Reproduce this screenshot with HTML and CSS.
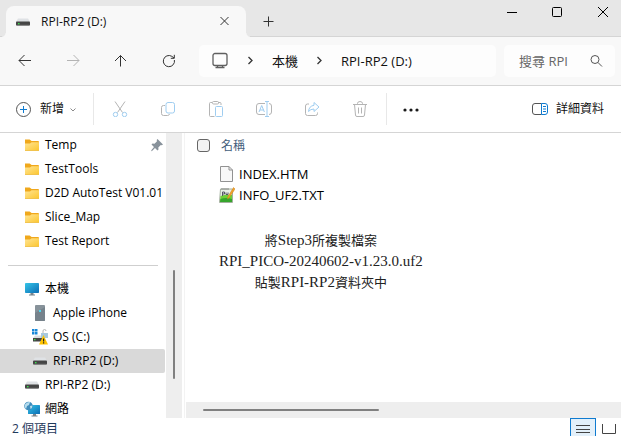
FILE: index.html
```html
<!DOCTYPE html>
<html lang="zh-Hant">
<head>
<meta charset="utf-8">
<meta name="viewport" content="width=device-width, initial-scale=1">
<title>RPI-RP2 (D:)</title>
<link rel="stylesheet" href="styles.css">
</head>
<body>
<svg class="defs" aria-hidden="true">
  <defs>
    <linearGradient id="gold" x1="0" y1="0" x2="1" y2="1"><stop offset="0" stop-color="#ffe596"/><stop offset="1" stop-color="#fcc62f"/></linearGradient>
    <linearGradient id="screen" x1="0" y1="0" x2="1" y2="1"><stop offset="0" stop-color="#35c5e8"/><stop offset="1" stop-color="#0c6db5"/></linearGradient>
    <symbol id="folder" viewBox="0 0 16 16"><path d="M1 2.500h4.600l2 1.500H14a1 1 0 0 1 1 1V9H1z" fill="#f0a81c"/><path d="M1 13.500V6.600h5l1.600-1.400H15v8.300z" fill="url(#gold)"/><path d="M1 13h14v.8H1z" fill="#eebb3a"/></symbol>
    <symbol id="drive" viewBox="0 0 16 16"><path d="M3 4.500h10l2 3.500H1z" fill="#dfe2e5"/><rect x="1" y="7.500" width="14" height="4" rx=".8" fill="#454545"/><path d="M1.500 10.800h13v.7h-13z" fill="#777"/><rect x="3" y="9" width="1.500" height="1.300" fill="#3be34c"/></symbol>
    <symbol id="monitor" viewBox="0 0 16 16"><rect x="1" y="2" width="14" height="10" rx=".8" fill="url(#screen)"/><path d="M6.500 12h3v1.500h1.500v1h-6v-1h1.500z" fill="#79848c"/></symbol>
  </defs>
</svg>

<header class="titlebar">
  <div class="tab">
    <svg class="i16"><use href="#drive"/></svg>
    <span class="tab-name">RPI-RP2 (D:)</span>
    <button class="plain i16" aria-label="關閉索引標籤"><svg class="i16" viewBox="0 0 16 16"><path d="M4.500 3l8 8M12.500 3l-8 8" class="ink"/></svg></button>
  </div>
  <button class="plain i16" aria-label="新增索引標籤"><svg class="i16" viewBox="0 0 16 16"><path d="M8.500 2.500v10M3.500 7.500h10" class="ink"/></svg></button>
  <div class="window-buttons">
    <button class="plain i16" aria-label="最小化"><svg class="i16" viewBox="0 0 16 16"><path d="M2 8.500h10" class="black"/></svg></button>
    <button class="plain i16" aria-label="最大化"><svg class="i16" viewBox="0 0 16 16"><rect x="2.500" y="3.500" width="9" height="9" rx="1" class="black"/></svg></button>
    <button class="plain i16" aria-label="關閉"><svg class="i16" viewBox="0 0 16 16"><path d="M3 3l10 10M13 3L3 13" class="black"/></svg></button>
  </div>
</header>

<nav class="navbar">
  <div class="nav-buttons">
    <button class="plain" aria-label="上一頁"><svg class="i16" viewBox="0 0 16 16"><path d="M14 7.500H2M7.500 2L2 7.500 7.500 13" class="ink"/></svg></button>
    <button class="plain" aria-label="下一頁" disabled><svg class="i16" viewBox="0 0 16 16"><path d="M2 7.500h12M8.500 2L14 7.500 8.500 13" class="dim"/></svg></button>
    <button class="plain" aria-label="上移"><svg class="i16" viewBox="0 0 16 16"><path d="M7.500 13.500V2.500M2 8L7.500 2.500 13 8" class="ink"/></svg></button>
    <button class="plain" aria-label="重新整理"><svg class="i16" viewBox="0 0 16 16"><path d="M13.400 7A5.600 5.600 0 1 1 10.800 3.300L13 5M13.300 1.800v3.500H9.800" class="ink"/></svg></button>
  </div>
  <div class="address">
    <svg class="i20" viewBox="0 0 20 20"><rect x="4" y="2.500" width="14" height="12" rx="2" class="grey heavy"/><path d="M8.500 14.500v2M13.500 14.500v2M6.500 16.500h9" class="grey heavy"/></svg>
    <svg class="i16 sep" viewBox="0 0 16 16"><path d="M6.500 4L10 7.500 6.500 11" class="ink heavy"/></svg>
    <a href="#pc">本機</a>
    <svg class="i16 sep" viewBox="0 0 16 16"><path d="M6.500 4L10 7.500 6.500 11" class="ink heavy"/></svg>
    <a href="#drive-d">RPI-RP2 (D:)</a>
  </div>
  <div class="search">
    <input type="text" placeholder="搜尋 RPI" aria-label="搜尋 RPI">
    <svg class="i16" viewBox="0 0 16 16"><circle cx="7" cy="6.500" r="4" class="grey2"/><path d="M10 9.500l4 4" class="grey2"/></svg>
  </div>
</nav>

<div class="commands">
  <button class="plain new">
    <svg class="i16" viewBox="0 0 16 16"><circle cx="7.500" cy="8.500" r="7" class="grey2"/><path d="M7.500 5v7M4 8.500h7" class="blue"/></svg>
    <span>新增</span>
    <svg class="i8" viewBox="0 0 8 8"><path d="M1.500 3.500L4 6 6.500 3.500" class="mid"/></svg>
  </button>
  <div class="tools">
    <button class="plain" aria-label="剪下" disabled><svg class="i16" viewBox="0 0 16 16"><path d="M3 .5l7.500 11M13 .5L5.500 11.500" class="dim"/><circle cx="3.500" cy="13.500" r="2.200" class="sky"/><circle cx="12.500" cy="13.500" r="2.200" class="sky"/></svg></button>
    <button class="plain" aria-label="複製" disabled><svg class="i16" viewBox="0 0 16 16"><path d="M5 4.500H3.500a2 2 0 0 0-2 2v6a2 2 0 0 0 2 2h4a2 2 0 0 0 2-1.500" class="dim"/><rect x="6" y="1.500" width="8.500" height="10.500" rx="2" class="sky"/></svg></button>
    <button class="plain" aria-label="貼上" disabled><svg class="i16" viewBox="0 0 16 16"><path d="M6.500 15.500h-4a1 1 0 0 1-1-1v-12a1 1 0 0 1 1-1H4M10 1.500h2a1 1 0 0 1 1 1V4" class="dim"/><rect x="4.500" y=".5" width="6" height="2.500" rx="1" class="dim"/><rect x="7.500" y="5.500" width="7" height="10" rx="1" class="sky"/></svg></button>
    <button class="plain" aria-label="重新命名" disabled><svg class="i16" viewBox="0 0 16 16"><path d="M9 2.500H3a2.500 2.500 0 0 0-2.500 2.500v6A2.500 2.500 0 0 0 3 13.500h6M13 2.500a2.500 2.500 0 0 1 2.500 2.500v6a2.500 2.500 0 0 1-2.500 2.500" class="dim"/><path d="M11 .5v15M9 .5h4M9 15.500h4M3 11l2.700-6.500L8.400 11M4 9h3.500" class="sky"/></svg></button>
    <button class="plain" aria-label="共用" disabled><svg class="i16" viewBox="0 0 16 16"><path d="M5 3H3.500a2 2 0 0 0-2 2v7.500a2 2 0 0 0 2 2h8a2 2 0 0 0 2-2v-1" class="dim"/><path d="M10 1.500L15 6l-5 4.500V8Q6.500 8 4.500 10.500 5 5 10 4.300z" class="sky"/></svg></button>
    <button class="plain" aria-label="刪除" disabled><svg class="i16" viewBox="0 0 16 16"><path d="M1 3.500h14M5.500 3V2.500a2.500 2 0 0 1 5 0V3M2.500 3.500l1 10.500a1.500 1.500 0 0 0 1.500 1.500h6a1.500 1.500 0 0 0 1.500-1.500l1-10.500M6.500 6.500v6M9.500 6.500v6" class="dim"/></svg></button>
  </div>
  <button class="plain more" aria-label="查看更多"><svg class="i20" viewBox="0 0 20 20"><circle cx="4" cy="11" r="1.600"/><circle cx="10" cy="11" r="1.600"/><circle cx="16" cy="11" r="1.600"/></svg></button>
  <button class="plain details">
    <svg class="i16" viewBox="0 0 16 16"><path d="M9.500 2.500H3a2.500 2.500 0 0 0-2.500 2.500v6A2.500 2.500 0 0 0 3 13.500h6.500" class="grey2"/><path d="M9.500 2.500H13A2.500 2.500 0 0 1 15.500 5v6a2.500 2.500 0 0 1-2.500 2.500H9.500zM11 5.500h3M11 8h3M11 10.500h3" class="blue"/></svg>
    <span>詳細資料</span>
  </button>
</div>

<div class="body">
  <aside class="sidebar">
    <ul>
      <li><svg class="i16"><use href="#folder"/></svg><span>Temp</span><svg class="i16 pin" viewBox="0 0 16 16"><path d="M9.500 2L15 7.500l-1.200.8-1-.2-2.500 2.500.2 2-1 1L7 11l-3 3-.8.200L3.500 13l2.500-3L3.500 7.500l1-1 2 .2L9 4.200 8.700 3z" fill="#88929b"/></svg></li>
      <li><svg class="i16"><use href="#folder"/></svg><span>TestTools</span></li>
      <li><svg class="i16"><use href="#folder"/></svg><span>D2D AutoTest V01.01</span></li>
      <li><svg class="i16"><use href="#folder"/></svg><span>Slice_Map</span></li>
      <li><svg class="i16"><use href="#folder"/></svg><span>Test Report</span></li>
    </ul>
    <hr>
    <ul>
      <li><svg class="i16"><use href="#monitor"/></svg><span>本機</span></li>
      <li class="child"><svg class="i16" viewBox="0 0 16 16"><rect x="3" y="0" width="10" height="16" rx="1" fill="#87929a"/><path d="M3 8l10-6v13a1 1 0 0 1-1 1H4a1 1 0 0 1-1-1z" fill="#76828b"/><rect x="7" y="5" width="2" height="2" fill="#4fd6ef"/></svg><span>Apple iPhone</span></li>
      <li class="child"><svg class="i16" viewBox="0 0 16 16"><path d="M0 0h2.500v2.500H0zM3 0h2.500v2.500H3zM0 3h2.500v2.500H0zM3 3h2.500v2.500H3z" fill="#1787d8"/><path d="M3 6.500h9L14 9H1z" fill="#d8dde1"/><rect x="1" y="9" width="11" height="3.500" fill="#444"/><rect x="2" y="10" width="1.500" height="1.300" fill="#3be34c"/><rect x="9" y="4" width="7" height="5" fill="#a8c8dd"/><path d="M11 4V2q0-1.500 1.500-1.500T14 2" class="dim"/><path d="M11.500 6L16 15.500H7z" fill="#ffc400"/><path d="M11 9.500h1.200v3H11zM11 13.300h1.200v1.200H11z" fill="#222"/></svg><span>OS (C:)</span></li>
      <li class="child selected"><svg class="i16"><use href="#drive"/></svg><span>RPI-RP2 (D:)</span></li>
      <li><svg class="i16"><use href="#drive"/></svg><span>RPI-RP2 (D:)</span></li>
      <li><svg class="i16" viewBox="0 0 16 16"><rect x="4" y="4" width="12" height="9" rx=".6" fill="url(#screen)"/><path d="M9 13h3v1.500h1.500v1h-6v-1H9z" fill="#79848c"/><circle cx="4.500" cy="5" r="4.300" fill="#3f8cbc"/><path d="M1 3.500Q3 .5 6 1L5 4 3 5 2 8Q0 6 1 3.500zM6 5l2.500-.5Q8.500 7 6.500 8z" fill="#b6dced"/></svg><span>網路</span></li>
    </ul>
  </aside>
  <div class="vscroll"><div class="vthumb"></div></div>
  <main class="content">
    <table class="files">
      <thead><tr><th><label class="head"><input type="checkbox"><span>名稱</span></label></th></tr></thead>
      <tbody>
        <tr><td><div class="file"><svg class="i16" viewBox="0 0 16 16"><path d="M1.500.5h8.500l3.500 3.500v11.500h-12z" fill="#f8f8f8" stroke="#929292"/><path d="M10 .5V4h3.500" fill="none" stroke="#929292"/></svg><span>INDEX.HTM</span></div></td></tr>
        <tr><td><div class="file"><svg class="i16" viewBox="0 0 16 16"><path d="M1.500 2h12v13.500h-13z" fill="#e8eee6" stroke="#a3b09e"/><path d="M1.500 9q5-2 11.500-1v7H1z" fill="#6fcf36"/><path d="M1.500 12q5-2 11.500 0v3H1z" fill="#36a52c"/><path d="M3 1v2M5 1v2M7 1v2M9 1v2" stroke="#888"/><path d="M3.500 5v4M3.500 5h2v2h-2M7 5.500v2h2v-2" stroke="#556" fill="none"/><path d="M14.500 .5L16 2 10 11l-1.500.8.300-1.800z" fill="#f3a329" stroke="#c9801f" stroke-width=".5"/></svg><span>INFO_UF2.TXT</span></div></td></tr>
      </tbody>
    </table>
    <p class="note">將<span class="latin">Step3</span>所複製檔案<br><span class="latin">RPI_PICO-20240602-v1.23.0.uf2</span><br>貼製<span class="latin">RPI-RP2</span>資料夾中</p>
    <div class="hscroll"><div class="hthumb"></div></div>
  </main>
</div>

<footer class="status">
  <span class="count">2 個項目</span>
  <div class="views">
    <button class="view active" aria-label="詳細資料檢視"><svg class="i16" viewBox="0 0 16 16"><path d="M1 2.500h14M1 6.500h14M1 9.500h14" class="line"/></svg></button>
    <button class="view" aria-label="大圖示檢視"><svg class="i16" viewBox="0 0 16 16"><path d="M1.500 1v9.500h13V1" class="line"/></svg></button>
  </div>
</footer>
</body>
</html>
```
FILE: styles.css
```css
* { box-sizing: border-box; }

body {
  margin: 0;
  height: 100vh;
  display: flex;
  flex-direction: column;
  overflow: hidden;
  background: #fff;
  color: #111;
  font: 12px/16px "Open Sans", "Noto Sans CJK TC", sans-serif;
}

.defs { position: absolute; width: 0; height: 0; }
svg { display: block; flex: none; fill: none; }
.i8 { width: 8px; height: 8px; }
.i16 { width: 16px; height: 16px; }
.i20 { width: 20px; height: 20px; }

.ink { stroke: #333; fill: none; }
.black { stroke: #000; fill: none; }
.grey { stroke: #606060; fill: none; }
.grey2 { stroke: #555; fill: none; }
.mid { stroke: #8a8a8a; fill: none; }
.dim { stroke: #b4b4b4; fill: none; }
.blue { stroke: #0f7bd0; fill: none; }
.sky { stroke: #9fcdf0; fill: none; }
.line { stroke: #444; fill: none; }
.heavy { stroke-width: 1.3; }

.plain {
  border: 0;
  padding: 0;
  background: none;
  color: inherit;
  font: inherit;
  display: flex;
  align-items: center;
  justify-content: center;
}

/* Title bar */
.titlebar {
  flex: none;
  display: flex;
  align-items: flex-end;
  gap: 14px;
  height: 37px;
  padding: 0 10px 0 6px;
  background: #e7e7e7;
  border-bottom: 1px solid #d5d5d5;
}
.titlebar > .plain { margin-bottom: 6px; }
.tab {
  position: relative;
  display: flex;
  align-items: center;
  width: 240px;
  height: 31px;
  margin-bottom: -1px;
  padding: 0 14px 0 9px;
  background: #f8f8f8;
  border-radius: 8px 8px 0 0;
}
.tab::before, .tab::after {
  content: "";
  position: absolute;
  bottom: 0;
  width: 4px;
  height: 4px;
}
.tab::before { left: -4px; background: radial-gradient(circle at 0 0, transparent 3px, #f8f8f8 4px); }
.tab::after { right: -4px; background: radial-gradient(circle at 100% 0, transparent 3px, #f8f8f8 4px); }
.tab-name { flex: 1; padding-left: 10px; }
.window-buttons {
  align-self: flex-start;
  display: flex;
  gap: 29px;
  margin-left: auto;
  padding-top: 4px;
}

/* Navigation bar */
.navbar {
  flex: none;
  display: flex;
  gap: 8px;
  height: 49px;
  padding: 8px 6px 8px 1px;
  background: #f8f8f8;
  border-bottom: 1px solid #d5d5d5;
}
.nav-buttons { display: flex; width: 190px; }
.nav-buttons .plain { width: 48px; flex: none; }
.address, .search {
  display: flex;
  align-items: center;
  background: #fdfdfd;
  border-radius: 5px;
}
.address { flex: 1; padding-left: 10px; font-size: 13px; }
.address a { color: inherit; text-decoration: none; }
.sep { margin: 0 14px 0 13px; }
.search { width: 111px; padding: 0 11px 0 15px; }
.search input {
  flex: 1;
  min-width: 0;
  border: 0;
  padding: 0;
  outline: 0;
  background: none;
  font: inherit;
  font-size: 13px;
}
.search input::placeholder { color: #666; opacity: 1; }

/* Command bar */
.commands {
  flex: none;
  display: flex;
  align-items: center;
  height: 47px;
  padding: 0 17px 0 16px;
  border-bottom: 1px solid #d5d5d5;
}
.new, .tools, .more { height: 32px; }
.new { gap: 8px; width: 78px; justify-content: flex-start; border-right: 1px solid #e8e8e8; }
.new .i8 { margin-left: -3px; }
.tools { display: flex; padding: 0 2px; border-right: 1px solid #e8e8e8; }
.tools .plain { width: 48px; }
.more { width: 48px; }
.more circle { fill: #1a1a1a; }
.details { gap: 8px; margin-left: auto; }

/* Folder tree */
.body { flex: 1; min-height: 0; display: flex; }
.sidebar { width: 166px; flex: none; overflow: hidden; }
.sidebar ul { margin: 0; padding: 0; list-style: none; }
.sidebar li {
  display: flex;
  align-items: center;
  gap: 5px;
  height: 24px;
  margin-right: 1px;
  padding-left: 24px;
  white-space: nowrap;
  color: #000;
}
.sidebar li.child { padding-left: 32px; }
.sidebar li.selected { background: #d9d9d9; border-radius: 0 2px 2px 0; }
.pin { margin: 0 1px 0 auto; }
.sidebar hr { margin: 12px 8px 11px; border: 0; border-top: 1px solid #cfcfcf; }
.vscroll { flex: none; width: 16px; padding: 137px 7px 0; background: #eee; }
.vthumb { width: 2px; height: 109px; border-radius: 1px; background: #808080; }

/* File list */
.content {
  flex: 1;
  min-width: 0;
  display: flex;
  flex-direction: column;
  align-items: flex-start;
  margin-left: 2px;
  padding-left: 1px;
  border-left: 1px solid #f3f3f3;
}
.files { width: 100%; border-collapse: collapse; }
.files th, .files td { padding: 0; text-align: left; font-weight: 400; }
.files th { height: 30px; vertical-align: top; }
.head { display: flex; align-items: center; gap: 11px; height: 25px; padding-left: 11px; color: #44607c; }
.head input {
  appearance: none;
  width: 13px;
  height: 13px;
  margin: 0;
  border: 1px solid #666;
  border-radius: 3px;
  background: #f3f3f3;
}
.file {
  display: flex;
  align-items: center;
  gap: 4px;
  height: 21px;
  padding-left: 33px;
  color: #000;
  font-size: 13px;
}
.note {
  margin: 25px 0 0 33px;
  text-align: center;
  font: 13px/21px "Liberation Serif", "Noto Sans CJK TC", serif;
  color: #222;
}
.latin { font-size: 15px; }
.hscroll { width: 100%; height: 16px; margin-top: auto; padding: 7px 0 0 17px; background: #eee; }
.hthumb { width: 176px; height: 2px; border-radius: 1px; background: #808080; }

/* Status bar */
.status {
  flex: none;
  display: flex;
  justify-content: space-between;
  height: 18px;
  padding-left: 12px;
  color: #1f3a5c;
}
.count { padding-top: 3px; }
.views { display: flex; }
.view { display: flex; justify-content: center; width: 25px; height: 19px; padding: 5px 0 0; border: 0; background: none; }
.view.active { width: 26px; padding-top: 4px; background: #e3f0fa; border: 1px solid #0f7bd0; border-bottom: 0; }
```
